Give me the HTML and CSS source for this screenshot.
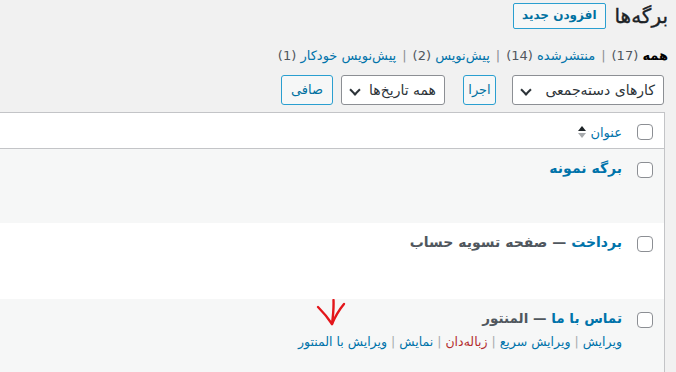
FILE: index.html
```html
<!DOCTYPE html>
<html lang="fa" dir="rtl">
<head>
<meta charset="utf-8">
<title>برگه‌ها</title>
<link rel="stylesheet" href="styles.css">
</head>
<body>
<div class="wrap">
  <div class="head">
    <h1 class="title">برگه‌ها</h1>
    <a class="add-new">افزودن جدید</a>
  </div>

  <ul class="subsubsub">
    <li><span class="current">همه</span> <span class="count">(17)</span></li>
    <li class="sep">|</li>
    <li><a>منتشرشده</a> <span class="count">(14)</span></li>
    <li class="sep">|</li>
    <li><a>پیش‌نویس</a> <span class="count">(2)</span></li>
    <li class="sep">|</li>
    <li><a>پیش‌نویس خودکار</a> <span class="count">(1)</span></li>
  </ul>

  <div class="tablenav">
    <div class="select bulk">کارهای دسته‌جمعی<span class="chev"></span></div>
    <div class="btn apply">اجرا</div>
    <div class="select dates">همه تاریخ‌ها<span class="chev"></span></div>
    <div class="btn filter">صافی</div>
  </div>

  <div class="list">
    <div class="row head-row">
      <div class="cb"><span class="box"></span></div>
      <div class="col-title"><a class="sort">عنوان</a><span class="arrows"><span class="up"></span><span class="down"></span></span></div>
    </div>
    <div class="row alt r1">
      <div class="cb"><span class="box"></span></div>
      <div class="col-title"><a class="row-title">برگه نمونه</a></div>
    </div>
    <div class="row r2">
      <div class="cb"><span class="box"></span></div>
      <div class="col-title"><a class="row-title">برداخت</a><span class="state"> — صفحه تسویه حساب</span></div>
    </div>
    <div class="row alt r3">
      <div class="cb"><span class="box"></span></div>
      <div class="col-title">
        <div><a class="row-title">تماس با ما</a><span class="state"> — المنتور</span></div>
        <div class="row-actions"><a>ویرایش</a><span class="bar">|</span><a>ویرایش سریع</a><span class="bar">|</span><a class="trash">زباله‌دان</a><span class="bar">|</span><a>نمایش</a><span class="bar">|</span><a>ویرایش با المنتور</a></div>
      </div>
    </div>
  </div>

  <svg class="annot" width="34" height="30" viewBox="0 0 34 30" fill="none" stroke="#e3161b" stroke-width="2.4" stroke-linecap="round" stroke-linejoin="round">
    <path d="M17.5 1 C17.8 8 17.2 16 16 25"/>
    <path d="M2 8 C7 13 12 19 16 25 C19 18 23 11 28 5"/>
  </svg>
</div>
</body>
</html>
```

FILE: styles.css
```css
html, body {
  margin: 0;
  padding: 0;
  width: 676px;
  height: 372px;
  overflow: hidden;
  background: #f1f1f1;
}
body {
  font-family: "DejaVu Sans", Tahoma, sans-serif;
  font-size: 13px;
  color: #3c434a;
  direction: rtl;
}
a { color: #0073aa; text-decoration: none; }

.wrap {
  position: relative;
  padding: 3px 8px 0 0;
}

.head {
  display: flex;
  align-items: center;
  gap: 9px;
  height: 26px;
}
.title {
  margin: 0;
  font-size: 20px;
  font-weight: 400;
  line-height: 26px;
  color: #1d2327;
  -webkit-text-stroke: 0.35px #1d2327;
}
.add-new {
  display: inline-block;
  box-sizing: border-box;
  height: 26px;
  line-height: 23px;
  padding: 0 8px;
  border: 1px solid #2a9fd0;
  border-radius: 2px;
  background: #f6f7f7;
  color: #0071a1;
  font-size: 12px;
  font-weight: 700;
}

.subsubsub {
  list-style: none;
  margin: 17px 0 0;
  padding: 0;
  display: flex;
  gap: 6px;
  height: 20px;
  line-height: 20px;
  font-size: 13px;
  color: #646970;
}
.subsubsub .current { color: #000; font-weight: 700; }
.subsubsub .count { color: #50575e; }
.subsubsub .sep { color: #8c8f94; }

.tablenav {
  display: flex;
  align-items: center;
  margin: 9px 4px 0 0;
  height: 30px;
}
.select {
  box-sizing: border-box;
  height: 30px;
  border: 1px solid #8c8f94;
  border-radius: 3px;
  background: #fff;
  color: #2c3338;
  font-size: 14px;
  line-height: 28px;
  padding: 0 8px 0 26px;
  position: relative;
}
.chev {
  position: absolute;
  left: 9px;
  top: 10px;
  width: 6px;
  height: 6px;
  border-right: 2px solid #2c3338;
  border-bottom: 2px solid #2c3338;
  transform: rotate(45deg);
}
.bulk { width: 152px; }
.dates { width: 104px; }
.btn {
  box-sizing: border-box;
  height: 30px;
  line-height: 28px;
  border: 1px solid #2a9fd0;
  border-radius: 3px;
  background: #f6f7f7;
  color: #0071a1;
  font-size: 13px;
  text-align: center;
}
.apply { width: 33px; margin-right: 16px; }
.dates { margin-right: 18px; }
.filter { width: 52px; margin-right: 8px; }

.list {
  margin: 7px 3px 0 0;
  width: 800px;
  border: 1px solid #c3c4c7;
  border-bottom: 0;
  background: #fff;
}
.row {
  display: flex;
  box-sizing: border-box;
}
.row.alt { background: #f6f7f7; }
.head-row {
  height: 36px;
  border-bottom: 1px solid #c3c4c7;
  background: #fff;
}
.r1 { height: 74px; }
.r2 { height: 76px; }
.r3 { height: 80px; }

.cb {
  width: 34px;
  flex: none;
  box-sizing: border-box;
  padding: 11px 11px 0 0;
}
.row:not(.head-row) .cb { padding-top: 13px; }
.box {
  display: block;
  box-sizing: border-box;
  width: 16px;
  height: 16px;
  border: 1px solid #8c8f94;
  border-radius: 4px;
  background: #fff;
}
.col-title {
  padding: 11px 8px 0 0;
}
.row:not(.head-row) .col-title { padding-top: 10px; }
.head-row .col-title {
  display: flex;
  align-items: center;
  gap: 4px;
  height: 16px;
  padding-top: 11px;
}
.sort { font-size: 13px; }
.arrows {
  display: flex;
  flex-direction: column;
  gap: 2px;
}
.up, .down {
  width: 0;
  height: 0;
  border-left: 4px solid transparent;
  border-right: 4px solid transparent;
}
.up { border-bottom: 5px solid #1d2327; }
.down { border-top: 5px solid #a7aaad; }

.row-title {
  font-size: 14px;
  font-weight: 700;
  line-height: 18px;
}
.state {
  font-size: 14px;
  font-weight: 700;
  color: #50575e;
}
.r3 .row-title, .r3 .state { font-size: 13.5px; }
.row-actions {
  margin-top: 6px;
  font-size: 12.5px;
  line-height: 18px;
  display: flex;
  gap: 4px;
  color: #a7aaad;
}
.row-actions .trash { color: #b32d2e; }

.annot {
  position: absolute;
  left: 316px;
  top: 299px;
}
```
